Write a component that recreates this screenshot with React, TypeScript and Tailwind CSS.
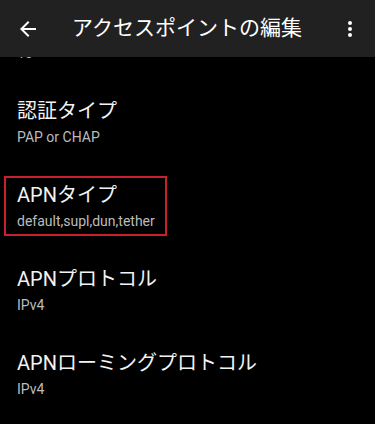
import React from "react";

const ITEMS = [
  { title: "認証タイプ", value: "PAP or CHAP" },
  { title: "APNタイプ", value: "default,supl,dun,tether", marked: true },
  { title: "APNプロトコル", value: "IPv4" },
  { title: "APNローミングプロトコル", value: "IPv4" },
];

function BackIcon() {
  return (
    <svg width="24" height="24" viewBox="0 0 24 24" fill="#ffffff">
      <path d="M20 11H7.83l5.59-5.59L12 4l-8 8 8 8 1.41-1.41L7.83 13H20v-2z" />
    </svg>
  );
}

function MoreIcon() {
  return (
    <svg width="24" height="24" viewBox="0 0 24 24" fill="#ffffff">
      <circle cx="12" cy="6" r="2" />
      <circle cx="12" cy="12" r="2" />
      <circle cx="12" cy="18" r="2" />
    </svg>
  );
}

function Pref({ title, value, marked }: { title: string; value: string; marked?: boolean }) {
  const body = (
    <>
      <div className="text-[20px] leading-[28px] text-[#f2f2f2]">{title}</div>
      <div className="mt-[2px] text-[14px] leading-[20px] text-[#bcbcbc]">{value}</div>
    </>
  );
  return (
    <div className="h-[84px] flex flex-col justify-center px-[17px]">
      {marked ? (
        <div className="w-fit -ml-[13px] pl-[11px] pr-[10px] pt-[3px] pb-[3px] border-2 border-[#c8202c]">
          {body}
        </div>
      ) : (
        body
      )}
    </div>
  );
}

export default function App() {
  return (
    <div
      className="w-[375px] h-[424px] bg-black overflow-hidden flex flex-col"
      style={{ fontFamily: "Roboto, 'Noto Sans CJK JP', sans-serif" }}
    >
      <header className="h-[57px] shrink-0 bg-[#212121] flex items-center pl-[16px] pr-[13px] relative z-10">
        <BackIcon />
        <h1 className="ml-[32px] flex-1 text-[21px] text-white">アクセスポイントの編集</h1>
        <MoreIcon />
      </header>
      <div className="flex-1 overflow-hidden">
        <div className="-mt-[61px]">
          <Pref title="MMSC" value="10" />
          {ITEMS.map((item) => (
            <Pref key={item.title} {...item} />
          ))}
        </div>
      </div>
    </div>
  );
}
